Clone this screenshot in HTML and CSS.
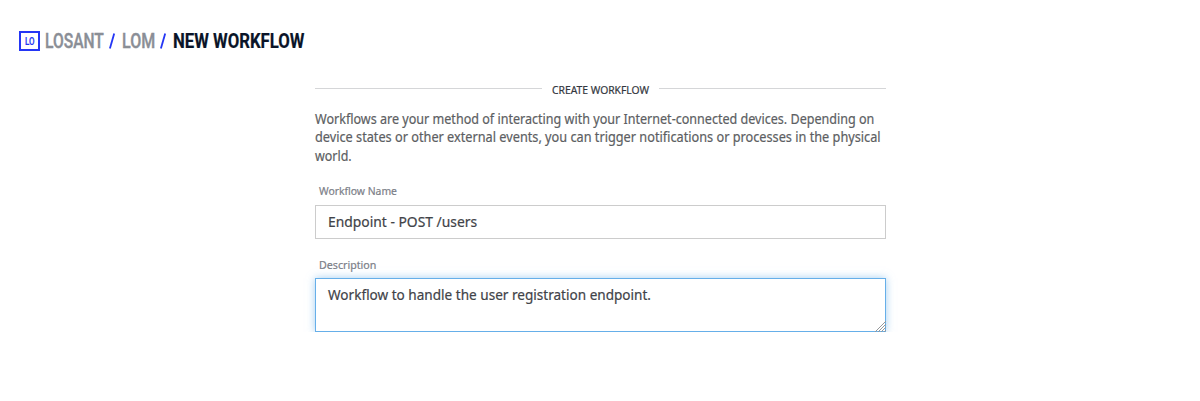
FILE: index.html
```html
<!DOCTYPE html>
<html lang="en">
<head>
<meta charset="utf-8">
<title>New Workflow</title>
<link rel="stylesheet" href="styles.css">
</head>
<body>
<header class="breadcrumbs">
  <div class="logo"><span>LO</span></div>
  <div class="crumb crumb-org"><span>LOSANT</span></div>
  <svg class="slash" viewBox="0 0 6 16"><path d="M5.2 .5 .9 15.5"/></svg>
  <div class="crumb crumb-app"><span>LOM</span></div>
  <svg class="slash" viewBox="0 0 6 16"><path d="M5.2 .5 .9 15.5"/></svg>
  <div class="crumb crumb-current"><span>NEW WORKFLOW</span></div>
</header>
<main class="form">
  <div class="legend"><i class="rule"></i><h1><span>CREATE WORKFLOW</span></h1><i class="rule"></i></div>
  <p class="intro">
    <span class="line-one">Workflows are your method of interacting with your Internet-connected devices. Depending on</span>
    <span class="line-two">device states or other external events, you can trigger notifications or processes in the physical</span>
    <span class="line-three">world.</span>
  </p>
  <div class="label label-name"><span>Workflow Name</span></div>
  <div class="field field-name"><span>Endpoint - POST /users</span></div>
  <div class="label label-description"><span>Description</span></div>
  <div class="field field-description"><span>Workflow to handle the user registration endpoint.</span>
    <svg class="grip" viewBox="0 0 12 12"><path d="M1 12 12 1M4 12l8-8M7 12l5-5M10 12l2-2"/></svg>
  </div>
</main>
</body>
</html>
```
FILE: styles.css
```css
body {
  margin: 0;
  background: #fff;
  font-family: "Noto Sans", sans-serif;
  color: #5c5e62;
  -webkit-text-stroke: .2px currentColor;
}
span {
  display: block;
  width: max-content;
  white-space: nowrap;
  transform-origin: left center;
}
.breadcrumbs {
  display: flex;
  align-items: center;
  height: 24px;
  padding: 29px 0 0 19px;
  font: 500 20px/23px Roboto, sans-serif;
}
.logo {
  box-sizing: border-box;
  width: 21px;
  height: 20px;
  margin-right: 5px;
  border: 2px solid #2436f5;
  color: #2436f5;
  font-size: 10px;
  line-height: 17px;
  font-weight: 500;
}
.logo span { margin-left: 4px; transform: scaleX(.8); }
.crumb { color: #8a8e96; -webkit-text-stroke-width: .4px; }
.crumb-org { width: 64px; }
.crumb-org span { transform: scaleX(.78); }
.crumb-app { width: 38px; margin-left: 7px; }
.crumb-app span { transform: scaleX(.8); }
.crumb-current { margin-left: 7px; color: #0a1428; font-weight: 700; -webkit-text-stroke-width: .2px; }
.crumb-current span { transform: scaleX(.837); }
.slash { width: 6px; height: 16px; fill: none; stroke: #2436f5; stroke-width: 1.8; }
.form { width: 571px; margin: 30px 0 0 315px; }
.legend { display: flex; justify-content: space-between; height: 16px; }
.rule { width: 227px; height: 1px; margin-top: 5px; background: #d5d6d8; }
.legend h1 {
  width: 97px;
  margin: 0;
  font-size: 11px;
  line-height: 14px;
  font-weight: 400;
  color: #33373e;
}
.legend h1 span { transform: scaleX(.937); }
.intro { margin: 10.6px 0 0; font-size: 14px; line-height: 18.7px; }
.line-one { transform: scaleX(.897); }
.line-two { transform: scaleX(.908); }
.line-three { transform: scaleX(.89); }
.label { padding-left: 4px; font-size: 11px; line-height: 13px; color: #7c8088; }
.label-name { margin-top: 18.3px; }
.label-name span { transform: scaleX(.943); }
.field {
  box-sizing: border-box;
  position: relative;
  padding-left: 12px;
  border: 1px solid #ccc;
  font-size: 14.5px;
  color: #414348;
}
.field-name { height: 34px; margin-top: 7.5px; line-height: 31px; }
.field-name span { transform: scaleX(.955); }
.label-description { margin-top: 19.5px; }
.label-description span { transform: scaleX(.97); }
.field-description {
  height: 54px;
  margin-top: 7px;
  border-color: #66afe9;
  line-height: 31px;
  box-shadow: 0 0 8px rgba(102, 175, 233, .6);
}
.field-description span { transform: scaleX(.936); }
.grip { position: absolute; right: -1px; bottom: -1px; width: 12px; height: 12px; fill: none; stroke: #96989a; stroke-width: 1; }
```
